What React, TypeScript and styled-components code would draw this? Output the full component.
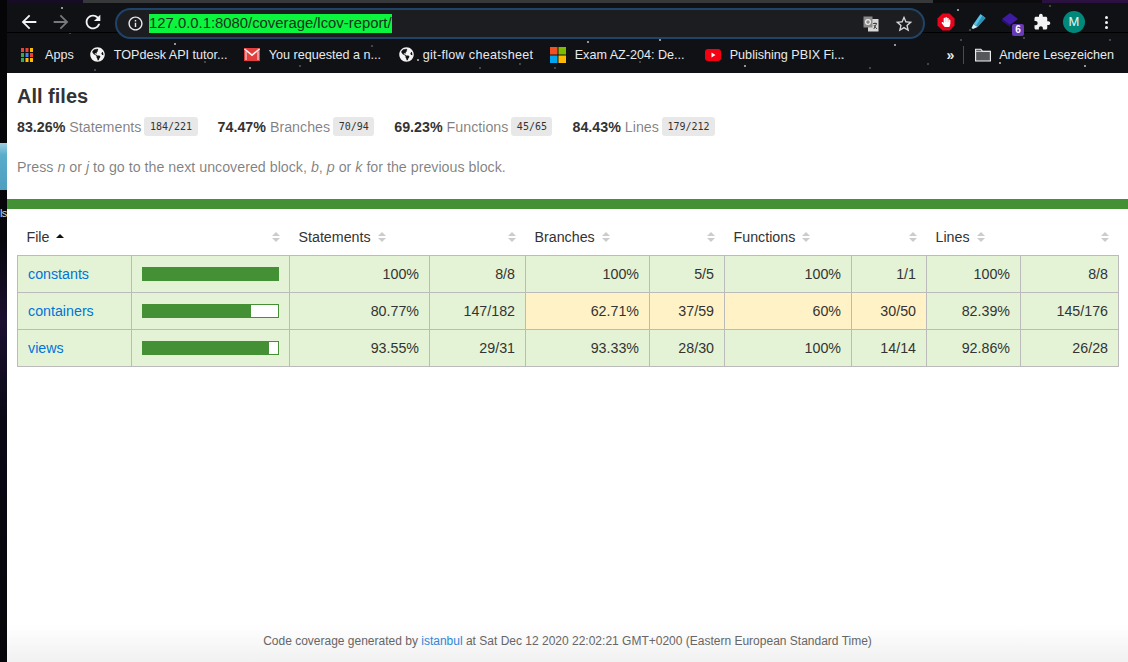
import styled, { createGlobalStyle } from 'styled-components';
import { FaGlobeAmericas, FaHandPaper } from 'react-icons/fa';

type Level = 'high' | 'medium';

type Metric = {
  pct: string;
  count: string;
  level: Level;
};

type Row = {
  name: string;
  fill: number;
  metrics: Metric[];
};

const widths = [114, 158, 140, 96, 124, 75, 127, 75, 94, 98];

const summary = [
  { pct: '83.26%', label: 'Statements', count: '184/221' },
  { pct: '74.47%', label: 'Branches', count: '70/94' },
  { pct: '69.23%', label: 'Functions', count: '45/65' },
  { pct: '84.43%', label: 'Lines', count: '179/212' },
];

const rows: Row[] = [
  {
    name: 'constants',
    fill: 100,
    metrics: [
      { pct: '100%', count: '8/8', level: 'high' },
      { pct: '100%', count: '5/5', level: 'high' },
      { pct: '100%', count: '1/1', level: 'high' },
      { pct: '100%', count: '8/8', level: 'high' },
    ],
  },
  {
    name: 'containers',
    fill: 80,
    metrics: [
      { pct: '80.77%', count: '147/182', level: 'high' },
      { pct: '62.71%', count: '37/59', level: 'medium' },
      { pct: '60%', count: '30/50', level: 'medium' },
      { pct: '82.39%', count: '145/176', level: 'high' },
    ],
  },
  {
    name: 'views',
    fill: 93,
    metrics: [
      { pct: '93.55%', count: '29/31', level: 'high' },
      { pct: '93.33%', count: '28/30', level: 'high' },
      { pct: '100%', count: '14/14', level: 'high' },
      { pct: '92.86%', count: '26/28', level: 'high' },
    ],
  },
];

const starPoints = [
  [62, 8], [140, 28], [205, 62], [262, 38], [300, 66], [372, 46], [418, 60], [470, 34], [520, 64],
  [588, 42], [640, 62], [690, 38], [745, 66], [801, 36], [842, 58], [895, 45], [928, 64], [961, 40],
  [1000, 63], [1024, 38], [1050, 6], [1085, 66], [1110, 40], [95, 70], [175, 44], [335, 36], [555, 68],
  [660, 40], [870, 68], [1068, 60], [958, 10], [970, 30], [70, 33], [250, 68], [480, 68],
];

const stars = starPoints
  .map(([x, y], i) => {
    const color = i % 3 === 0 ? 'rgba(255,255,255,.55)' : 'rgba(190,190,170,.3)';
    return `radial-gradient(circle at ${x}px ${y}px, ${color} 1px, transparent 1.4px)`;
  })
  .join(', ');

function BackIcon() {
  return (
    <svg width="22" height="22" viewBox="0 0 24 24" fill="#f1f3f4">
      <path d="M20 11H7.83l5.59-5.59L12 4l-8 8 8 8 1.41-1.41L7.83 13H20v-2z" />
    </svg>
  );
}

function ForwardIcon() {
  return (
    <svg width="22" height="22" viewBox="0 0 24 24" fill="#77797b">
      <path d="M12 4l-1.41 1.41L16.17 11H4v2h12.17l-5.58 5.59L12 20l8-8z" />
    </svg>
  );
}

function ReloadIcon() {
  return (
    <svg width="22" height="22" viewBox="0 0 24 24" fill="#f1f3f4">
      <path d="M17.65 6.35C16.2 4.9 14.21 4 12 4c-4.42 0-7.99 3.58-7.99 8s3.57 8 7.99 8c3.73 0 6.84-2.55 7.73-6h-2.08c-.82 2.33-3.04 4-5.65 4-3.31 0-6-2.69-6-6s2.69-6 6-6c1.66 0 3.14.69 4.22 1.78L13 11h7V4l-2.35 2.35z" />
    </svg>
  );
}

function InfoIcon() {
  return (
    <svg width="17" height="17" viewBox="0 0 24 24" fill="#e8eaed">
      <path d="M11 7h2v2h-2zm0 4h2v6h-2zm1-9C6.48 2 2 6.48 2 12s4.48 10 10 10 10-4.48 10-10S17.52 2 12 2zm0 18c-4.41 0-8-3.59-8-8s3.59-8 8-8 8 3.59 8 8-3.59 8-8 8z" />
    </svg>
  );
}

function TranslateIcon() {
  return (
    <svg width="16" height="16" viewBox="0 0 16 16">
      <rect x="5" y="3" width="10.5" height="12.5" fill="#d8d8d8" />
      <rect x="0.5" y="0.5" width="9" height="11" fill="#8a8a8a" />
      <circle cx="5" cy="6" r="2.4" fill="none" stroke="#eee" strokeWidth="1.2" />
      <path d="M10 7.5h4M12 6.5v1M10.8 13l2.6-5M11 9c.6 1.6 1.5 2.9 3 3.8" fill="none" stroke="#444" strokeWidth="1" />
    </svg>
  );
}

function StarIcon() {
  return (
    <svg width="20" height="20" viewBox="0 0 24 24" fill="#d6d8da">
      <path d="M22 9.24l-7.19-.62L12 2 9.19 8.63 2 9.24l5.46 4.73L5.82 21 12 17.27 18.18 21l-1.63-7.03L22 9.24zM12 15.4l-3.76 2.27 1-4.28-3.32-2.88 4.38-.38L12 6.1l1.71 4.04 4.38.38-3.32 2.88 1 4.28L12 15.4z" />
    </svg>
  );
}

function StopIcon() {
  return (
    <svg width="18" height="18" viewBox="0 0 18 18">
      <polygon points="5.5,0.5 12.5,0.5 17.5,5.5 17.5,12.5 12.5,17.5 5.5,17.5 0.5,12.5 0.5,5.5" fill="#e8051c" />
    </svg>
  );
}

function PenIcon() {
  return (
    <svg width="18" height="18" viewBox="0 0 18 18">
      <polygon points="11.5,1 16.5,5 8.5,14 4.5,11" fill="#54c2e8" />
      <polygon points="13.5,2.6 16.5,5 8.5,14 7,12.8" fill="#2b93b8" />
      <polygon points="4.5,11 8.5,14 4,16 2.5,15" fill="#cfeef8" />
    </svg>
  );
}

function DiamondIcon() {
  return (
    <DiamondSvg width="18" height="16" viewBox="0 0 18 16">
      <polygon points="9,1 17,7 9,13 1,7" fill="#3f1aa5" />
      <polygon points="1,7 9,13 9,15 1,9" fill="#2c1178" />
    </DiamondSvg>
  );
}

function PuzzleIcon() {
  return (
    <svg width="18" height="18" viewBox="0 0 24 24" fill="#f1f3f4">
      <path d="M20.5 11H19V7c0-1.1-.9-2-2-2h-4V3.5C13 2.12 11.88 1 10.5 1S8 2.12 8 3.5V5H4c-1.1 0-1.99.9-1.99 2v3.8H3.5c1.49 0 2.7 1.21 2.7 2.7s-1.21 2.7-2.7 2.7H2V20c0 1.1.9 2 2 2h3.8v-1.5c0-1.49 1.21-2.7 2.7-2.7 1.49 0 2.7 1.21 2.7 2.7V22H17c1.1 0 2-.9 2-2v-4h1.5c1.38 0 2.5-1.12 2.5-2.5S21.88 11 20.5 11z" />
    </svg>
  );
}

function AppsIcon() {
  const colors = ['#ea4335', '#ea4335', '#fbbc05', '#34a853', '#4285f4', '#ea4335', '#34a853', '#fbbc05', '#fbbc05'];
  return (
    <svg width="12" height="14" viewBox="0 0 12 14">
      {colors.map((color, i) => (
        <rect key={i} x={(i % 3) * 4.5} y={Math.floor(i / 3) * 5} width="3" height="4" fill={color} />
      ))}
    </svg>
  );
}

function GmailIcon() {
  return (
    <svg width="16" height="13" viewBox="0 0 16 13">
      <rect width="16" height="13" fill="#e23f3f" />
      <path d="M0.5 1L8 7.2 15.5 1" fill="none" stroke="#f4f4f4" strokeWidth="1.6" />
      <path d="M2 3.4V12M14 3.4V12" stroke="#f4f4f4" strokeWidth="1" />
    </svg>
  );
}

function MicrosoftIcon() {
  return (
    <svg width="16" height="16" viewBox="0 0 16 16">
      <rect width="7.5" height="7.5" fill="#f25022" />
      <rect x="8.5" width="7.5" height="7.5" fill="#7fba00" />
      <rect y="8.5" width="7.5" height="7.5" fill="#00a4ef" />
      <rect x="8.5" y="8.5" width="7.5" height="7.5" fill="#ffb900" />
    </svg>
  );
}

function YoutubeIcon() {
  return (
    <svg width="16" height="12" viewBox="0 0 16 12">
      <rect width="16" height="12" rx="3" fill="#f40012" />
      <polygon points="6.5,3.5 10.5,6 6.5,8.5" fill="#fff" />
    </svg>
  );
}

function FolderIcon() {
  return (
    <svg width="16" height="14" viewBox="0 0 16 14">
      <path d="M0.6 13V1.2h5.2l1.6 2h8V13z" fill="#55575a" stroke="#f1f3f4" strokeWidth="1.1" />
      <path d="M1 3.4h14" stroke="#f1f3f4" strokeWidth="0.8" />
    </svg>
  );
}

const bookmarks = [
  { icon: <FaGlobeAmericas size={15} color="#f4f4f4" />, label: 'TOPdesk API tutor...', width: 114, tracking: 0 },
  { icon: <GmailIcon />, label: 'You requested a n...', width: 114, tracking: 0 },
  { icon: <FaGlobeAmericas size={15} color="#f4f4f4" />, label: 'git-flow cheatsheet', width: 111, tracking: 0.3 },
  { icon: <MicrosoftIcon />, label: 'Exam AZ-204: De...', width: 114, tracking: 0 },
  { icon: <YoutubeIcon />, label: 'Publishing PBIX Fi...', width: 111, tracking: 0 },
];

function Sorter() {
  return (
    <SorterBox>
      <SortUp />
      <SortDown />
    </SorterBox>
  );
}

export default function App() {
  return (
    <Root>
      <GlobalStyle />
      <Desktop>
        <DesktopIcon />
        <DesktopLabel>ls</DesktopLabel>
      </Desktop>
      <Browser>
        <Chrome>
          <TabStrip />
          <Toolbar>
            <NavButton><BackIcon /></NavButton>
            <NavButton><ForwardIcon /></NavButton>
            <NavButton><ReloadIcon /></NavButton>
            <Omnibox>
              <InfoIcon />
              <UrlHighlight>127.0.0.1:8080/coverage/lcov-report/</UrlHighlight>
              <OmniboxActions>
                <TranslateIcon />
                <StarIcon />
              </OmniboxActions>
            </Omnibox>
            <Extensions>
              <ExtensionButton>
                <StopIcon />
                <StopHand><FaHandPaper size={10} color="#fff" /></StopHand>
              </ExtensionButton>
              <ExtensionButton><PenIcon /></ExtensionButton>
              <ExtensionButton>
                <DiamondIcon />
                <CountBadge>6</CountBadge>
              </ExtensionButton>
              <ExtensionButton><PuzzleIcon /></ExtensionButton>
              <ExtensionButton><Avatar>M</Avatar></ExtensionButton>
              <ExtensionButton>
                <MenuDots>
                  <i /><i /><i />
                </MenuDots>
              </ExtensionButton>
            </Extensions>
          </Toolbar>
          <Bookmarks>
            <AppsItem><AppsIcon /><span>Apps</span></AppsItem>
            {bookmarks.map(item => (
              <Bookmark key={item.label}>
                {item.icon}
                <BookmarkLabel $width={item.width} $tracking={item.tracking}>{item.label}</BookmarkLabel>
              </Bookmark>
            ))}
            <BookmarksEnd>
              <Overflow>»</Overflow>
              <BarDivider />
              <Bookmark><FolderIcon /><span>Andere Lesezeichen</span></Bookmark>
            </BookmarksEnd>
          </Bookmarks>
        </Chrome>
        <Page>
          <Header>
            <Title>All files</Title>
            <Summary>
              {summary.map(item => (
                <SummaryItem key={item.label}>
                  <strong>{item.pct}</strong>
                  <Quiet>{item.label}</Quiet>
                  <Pad>{item.count}</Pad>
                </SummaryItem>
              ))}
            </Summary>
            <Hint>
              Press <em>n</em> or <em>j</em> to go to the next uncovered block, <em>b</em>, <em>p</em> or <em>k</em> for the previous block.
            </Hint>
          </Header>
          <StatusLine />
          <TableWrap>
            <Table>
              <colgroup>
                {widths.map((width, i) => (
                  <col key={i} style={{ width }} />
                ))}
              </colgroup>
              <thead>
                <tr>
                  <HeadCell>
                    <HeadRow>File <SortedMark /></HeadRow>
                  </HeadCell>
                  <HeadCell><HeadRow $end><Sorter /></HeadRow></HeadCell>
                  {['Statements', 'Branches', 'Functions', 'Lines'].map(label => [
                    <HeadCell key={label}>
                      <HeadRow>{label}<Sorter /></HeadRow>
                    </HeadCell>,
                    <HeadCell key={`${label}-raw`}><HeadRow $end><Sorter /></HeadRow></HeadCell>,
                  ])}
                </tr>
              </thead>
              <tbody>
                {rows.map(row => (
                  <tr key={row.name}>
                    <FileCell $level="high"><FileLink href="#">{row.name}</FileLink></FileCell>
                    <BarCell $level="high">
                      <BarTrack>
                        <BarFill style={{ width: `${row.fill}%` }} />
                      </BarTrack>
                    </BarCell>
                    {row.metrics.map((metric, i) => [
                      <NumberCell key={`pct-${i}`} $level={metric.level}>{metric.pct}</NumberCell>,
                      <NumberCell key={`count-${i}`} $level={metric.level}>{metric.count}</NumberCell>,
                    ])}
                  </tr>
                ))}
              </tbody>
            </Table>
          </TableWrap>
          <Footer>
            Code coverage generated by <FooterLink href="#">istanbul</FooterLink> at Sat Dec 12 2020 22:02:21 GMT+0200 (Eastern European Standard Time)
          </Footer>
        </Page>
      </Browser>
    </Root>
  );
}

const GlobalStyle = createGlobalStyle`
  html, body {
    margin: 0;
    padding: 0;
    height: 100%;
    overflow: hidden;
  }
  body {
    font-family: "Liberation Sans", Arial, sans-serif;
    font-size: 14.25px;
    color: #333;
  }
`;

const Root = styled.div`
  display: flex;
  width: 1128px;
  height: 662px;
  overflow: hidden;
`;

const Desktop = styled.div`
  width: 7px;
  flex: none;
  padding-top: 143px;
  box-sizing: border-box;
  overflow: hidden;
  background: linear-gradient(180deg, #050507 0, #07070c 240px, #1c1030 320px, #0a0814 420px, #06060a 662px);
`;

const DesktopIcon = styled.div`
  height: 47px;
  background: linear-gradient(180deg, #9ecfe0 0, #5aaccb 12px, #4e9fc0 100%);
`;

const DesktopLabel = styled.div`
  margin-top: 16px;
  color: #d8d8d8;
  font-size: 11px;
  line-height: 14px;
  letter-spacing: -0.6px;
  white-space: nowrap;
`;

const Browser = styled.div`
  flex: 1;
  min-width: 0;
  display: flex;
  flex-direction: column;
`;

const Chrome = styled.div`
  flex: none;
  height: 73px;
  background-color: #101115;
  background-image: ${stars};
  background-position: -7px 0;
`;

const TabStrip = styled.div`
  height: 3px;
  background: linear-gradient(
    90deg,
    #170c26 0,
    #170c26 76px,
    #37383a 76px,
    #37383a 926px,
    #0b0b0e 926px,
    #0b0b0e 1035px,
    #2a1140 1035px,
    #2a1140 100%
  );
`;

const Toolbar = styled.div`
  height: 33px;
  display: flex;
  align-items: flex-start;
  padding: 5px 0 0 6px;
  box-sizing: border-box;
  background: linear-gradient(180deg, transparent 29px, #000 29px, #000 30px, transparent 30px);
`;

const NavButton = styled.div`
  width: 32px;
  height: 28px;
  flex: none;
  display: flex;
  align-items: center;
  justify-content: center;
`;

const Omnibox = styled.div`
  width: 810px;
  height: 31px;
  flex: none;
  margin-left: 6px;
  padding: 0 9px 0 10px;
  box-sizing: border-box;
  display: flex;
  align-items: center;
  background: #1b1d21;
  border: 2px solid #1f4468;
  border-radius: 16px;
`;

const UrlHighlight = styled.span`
  margin-left: 5px;
  background: #0cf53e;
  color: #17321d;
  font-size: 14.85px;
  line-height: 19px;
`;

const OmniboxActions = styled.div`
  margin-left: auto;
  display: flex;
  align-items: center;
  gap: 15px;
`;

const Extensions = styled.div`
  display: flex;
  margin-left: 5px;
`;

const ExtensionButton = styled.div`
  width: 32px;
  height: 28px;
  position: relative;
  display: flex;
  align-items: center;
  justify-content: center;
`;

const DiamondSvg = styled.svg`
  margin-top: -4px;
`;

const StopHand = styled.span`
  position: absolute;
  left: 11px;
  top: 9px;
  display: flex;
`;

const CountBadge = styled.span`
  position: absolute;
  left: 18px;
  top: 16px;
  width: 12px;
  height: 12px;
  border-radius: 2px;
  background: #673ab7;
  color: #fff;
  font-size: 10px;
  line-height: 12px;
  font-weight: bold;
  text-align: center;
`;

const Avatar = styled.div`
  width: 22px;
  height: 22px;
  border-radius: 50%;
  background: #00897b;
  color: #e8f5f3;
  font-size: 13px;
  line-height: 22px;
  text-align: center;
`;

const MenuDots = styled.div`
  display: flex;
  flex-direction: column;
  gap: 2px;

  i {
    display: block;
    width: 3px;
    height: 3px;
    border-radius: 50%;
    background: #f1f3f4;
  }
`;

const Bookmarks = styled.div`
  height: 37px;
  display: flex;
  align-items: center;
  padding-left: 14px;
  color: #e8eaed;
  font-size: 12.6px;
`;

const Bookmark = styled.div`
  display: flex;
  align-items: center;
  gap: 9px;
  margin-right: 16px;
  white-space: nowrap;
`;

const BookmarkLabel = styled.span<{ $width: number; $tracking: number }>`
  width: ${props => props.$width}px;
  letter-spacing: ${props => props.$tracking}px;
`;

const AppsItem = styled(Bookmark)`
  gap: 12px;
`;

const BookmarksEnd = styled.div`
  margin-left: auto;
  display: flex;
  align-items: center;

  ${Bookmark} {
    margin-right: 14px;
    gap: 8px;
  }
`;

const Overflow = styled.span`
  font-size: 14px;
  font-weight: bold;
  line-height: 14px;
`;

const BarDivider = styled.span`
  width: 1px;
  height: 18px;
  margin: 0 11px 0 9px;
  background: #4a4c50;
`;

const Page = styled.div`
  flex: 1;
  min-height: 0;
  display: flex;
  flex-direction: column;
  background: #fff;
`;

const Header = styled.div`
  padding: 11px 10px 0;
`;

const Title = styled.h1`
  margin: 0;
  font-size: 20px;
  line-height: 24px;
  font-weight: bold;
  color: #333;
`;

const Summary = styled.div`
  display: flex;
  gap: 20px;
  margin-top: 9px;
`;

const SummaryItem = styled.div`
  display: flex;
  align-items: center;
  height: 19px;
  white-space: nowrap;

  strong {
    margin-right: 4px;
  }
`;

const Quiet = styled.span`
  color: rgba(0, 0, 0, 0.5);
`;

const Pad = styled.span`
  margin-left: 3px;
  padding: 0 5.5px;
  height: 19px;
  line-height: 19px;
  border-radius: 3px;
  background: #e8e8e8;
  color: #333;
  font-family: "DejaVu Sans Mono", monospace;
  font-size: 10px;
`;

const Hint = styled.p`
  margin: 21px 0 0;
  line-height: 20px;
  color: rgba(0, 0, 0, 0.5);
`;

const StatusLine = styled.div`
  height: 10px;
  margin-top: 22px;
  flex: none;
  background: #439134;
`;

const TableWrap = styled.div`
  padding: 16px 9px 0 10px;
`;

const Table = styled.table`
  table-layout: fixed;
  width: 1102px;
  border-collapse: collapse;
`;

const HeadCell = styled.th`
  height: 30px;
  padding: 0 10px 6px 9px;
  box-sizing: border-box;
  text-align: left;
  font-weight: normal;
  white-space: nowrap;
  border: none;
`;

const HeadRow = styled.div<{ $end?: boolean }>`
  display: flex;
  align-items: center;
  justify-content: ${props => (props.$end ? 'flex-end' : 'flex-start')};
  gap: 7px;
`;

const SorterBox = styled.span`
  display: flex;
  flex-direction: column;
  gap: 2px;
  width: 8px;
`;

const SortUp = styled.i`
  display: block;
  border-left: 4px solid transparent;
  border-right: 4px solid transparent;
  border-bottom: 4px solid #ccc;
`;

const SortDown = styled.i`
  display: block;
  border-left: 4px solid transparent;
  border-right: 4px solid transparent;
  border-top: 4px solid #ccc;
`;

const SortedMark = styled.i`
  display: block;
  margin-top: -2px;
  border-left: 4px solid transparent;
  border-right: 4px solid transparent;
  border-bottom: 4px solid #111;
`;

const Cell = styled.td<{ $level: Level }>`
  height: 37px;
  padding: 0 10px;
  box-sizing: border-box;
  border: 1px solid #bbb;
  background: ${props => (props.$level === 'high' ? '#e4f3d5' : '#fff2c6')};
  white-space: nowrap;
`;

const FileCell = styled(Cell)``;

const FileLink = styled.a`
  color: #0074d9;
  text-decoration: none;
`;

const BarCell = styled(Cell)``;

const BarTrack = styled.div`
  height: 14px;
  box-sizing: border-box;
  background: #fff;
  border: 1px solid #439134;
`;

const BarFill = styled.div`
  height: 100%;
  background: #439134;
`;

const NumberCell = styled(Cell)`
  text-align: right;
`;

const Footer = styled.div`
  margin-top: auto;
  height: 38px;
  padding-top: 10px;
  box-sizing: border-box;
  text-align: center;
  font-size: 12px;
  line-height: 14px;
  color: #666;
  background: linear-gradient(180deg, #fff 0, #f1f1f1 100%);
`;

const FooterLink = styled.a`
  color: #2f86d6;
  text-decoration: none;
`;
